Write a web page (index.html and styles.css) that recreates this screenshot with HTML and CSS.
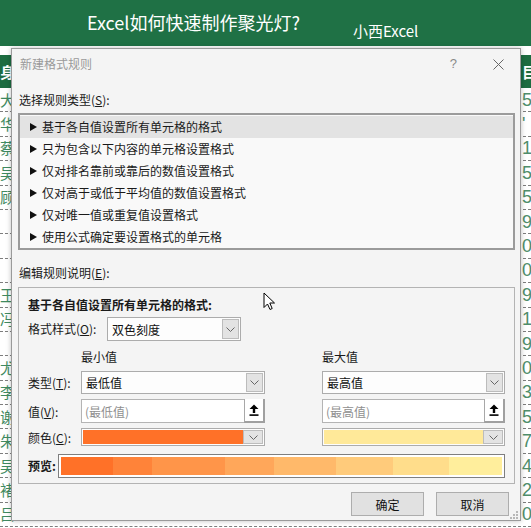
FILE: index.html
```html
<!DOCTYPE html>
<html lang="zh-CN">
<head>
<meta charset="utf-8">
<title>新建格式规则</title>
<link rel="stylesheet" href="styles.css">
</head>
<body>
<div class="banner">
  <span class="btitle">Excel如何快速制作聚光灯?</span>
  <span class="bsub">小西Excel</span>
</div>
<div class="sheet">
  <div class="hrow"><span class="lc">身</span><span class="rc">目</span></div>
  <div class="row"><span class="lc">大</span><span class="rc">5</span></div>
  <div class="row"><span class="lc">华</span><span class="rc">'</span></div>
  <div class="row"><span class="lc">蔡</span><span class="rc">1</span></div>
  <div class="row"><span class="lc">吴</span><span class="rc">5</span></div>
  <div class="row"><span class="lc">顾</span><span class="rc">5</span></div>
  <div class="row"><span class="lc"></span><span class="rc">9</span></div>
  <div class="row"><span class="lc"></span><span class="rc">0</span></div>
  <div class="row"><span class="lc"></span><span class="rc">0</span></div>
  <div class="row"><span class="lc">王</span><span class="rc">9</span></div>
  <div class="row"><span class="lc">冯</span><span class="rc">1</span></div>
  <div class="row"><span class="lc"></span><span class="rc">9</span></div>
  <div class="row"><span class="lc">尤</span><span class="rc">0</span></div>
  <div class="row"><span class="lc">李</span><span class="rc">3</span></div>
  <div class="row"><span class="lc">谢</span><span class="rc">5</span></div>
  <div class="row"><span class="lc">朱</span><span class="rc">7</span></div>
  <div class="row"><span class="lc">吴</span><span class="rc">4</span></div>
  <div class="row"><span class="lc">褚</span><span class="rc">2</span></div>
  <div class="row"><span class="lc">吕</span><span class="rc">0</span></div>
</div>

<div class="dialog">
  <div class="titlebar">
    <span class="dtitle">新建格式规则</span>
    <span class="help">?</span>
    <svg class="close" width="11" height="11" viewBox="0 0 11 11"><path d="M0.5 0.5 L10.5 10.5 M10.5 0.5 L0.5 10.5" stroke="#666" stroke-width="1" fill="none"/></svg>
  </div>
  <div class="label l1">选择规则类型(<u>S</u>):</div>
  <ul class="rulelist">
    <li class="sel"><svg class="tri" width="7" height="8" viewBox="0 0 7 8"><polygon points="0,0 7,4 0,8" fill="#111"/></svg>基于各自值设置所有单元格的格式</li>
    <li><svg class="tri" width="7" height="8" viewBox="0 0 7 8"><polygon points="0,0 7,4 0,8" fill="#111"/></svg>只为包含以下内容的单元格设置格式</li>
    <li><svg class="tri" width="7" height="8" viewBox="0 0 7 8"><polygon points="0,0 7,4 0,8" fill="#111"/></svg>仅对排名靠前或靠后的数值设置格式</li>
    <li><svg class="tri" width="7" height="8" viewBox="0 0 7 8"><polygon points="0,0 7,4 0,8" fill="#111"/></svg>仅对高于或低于平均值的数值设置格式</li>
    <li><svg class="tri" width="7" height="8" viewBox="0 0 7 8"><polygon points="0,0 7,4 0,8" fill="#111"/></svg>仅对唯一值或重复值设置格式</li>
    <li><svg class="tri" width="7" height="8" viewBox="0 0 7 8"><polygon points="0,0 7,4 0,8" fill="#111"/></svg>使用公式确定要设置格式的单元格</li>
  </ul>
  <div class="label l2">编辑规则说明(<u>E</u>):</div>
  <div class="rulebox">
    <div class="rtitle">基于各自值设置所有单元格的格式:</div>
    <div class="stylerow">
      <span class="slabel">格式样式(<u>O</u>):</span>
      <div class="combo stylecombo"><span class="ctext">双色刻度</span><span class="arrow"><svg width="9" height="5" viewBox="0 0 9 5"><polyline points="0.5,0.5 4.5,4.5 8.5,0.5" fill="none" stroke="#666" stroke-width="1"/></svg></span></div>
    </div>
    <div class="grid">
      <span></span><span class="colhead">最小值</span><span></span><span class="colhead">最大值</span>

      <span class="rl">类型(<u>T</u>):</span>
      <div class="combo"><span class="ctext">最低值</span><span class="arrow"><svg width="9" height="5" viewBox="0 0 9 5"><polyline points="0.5,0.5 4.5,4.5 8.5,0.5" fill="none" stroke="#666" stroke-width="1"/></svg></span></div>
      <span></span>
      <div class="combo"><span class="ctext">最高值</span><span class="arrow"><svg width="9" height="5" viewBox="0 0 9 5"><polyline points="0.5,0.5 4.5,4.5 8.5,0.5" fill="none" stroke="#666" stroke-width="1"/></svg></span></div>

      <span class="rl">值(<u>V</u>):</span>
      <div class="input"><span class="ph">(最低值)</span><span class="pick"><svg width="10" height="12" viewBox="0 0 10 12"><polygon points="5,0.5 9.5,5 6.2,5 6.2,9 3.8,9 3.8,5 0.5,5" fill="#000"/><rect x="0.5" y="10.3" width="9" height="1.6" fill="#000"/></svg></span></div>
      <span></span>
      <div class="input"><span class="ph">(最高值)</span><span class="pick"><svg width="10" height="12" viewBox="0 0 10 12"><polygon points="5,0.5 9.5,5 6.2,5 6.2,9 3.8,9 3.8,5 0.5,5" fill="#000"/><rect x="0.5" y="10.3" width="9" height="1.6" fill="#000"/></svg></span></div>

      <span class="rl">颜色(<u>C</u>):</span>
      <div class="combo colorcombo"><span class="swatch orange"></span><span class="arrow"><svg width="9" height="5" viewBox="0 0 9 5"><polyline points="0.5,0.5 4.5,4.5 8.5,0.5" fill="none" stroke="#666" stroke-width="1"/></svg></span></div>
      <span></span>
      <div class="combo colorcombo"><span class="swatch yellow"></span><span class="arrow"><svg width="9" height="5" viewBox="0 0 9 5"><polyline points="0.5,0.5 4.5,4.5 8.5,0.5" fill="none" stroke="#666" stroke-width="1"/></svg></span></div>
    </div>
    <div class="preview">
      <span class="plabel">预览:</span>
      <div class="bar">
        <span class="seg s1"></span><span class="seg s2"></span><span class="seg s3"></span><span class="seg s4"></span><span class="seg s5"></span><span class="seg s6"></span><span class="seg s7"></span><span class="seg s8"></span>
      </div>
    </div>
  </div>
  <div class="buttons">
    <button class="btn">确定</button>
    <button class="btn">取消</button>
  </div>
  <svg class="grip" width="8" height="8" viewBox="0 0 8 8">
    <rect x="6" y="0" width="2" height="2" fill="#b8b8b8"/>
    <rect x="3" y="3" width="2" height="2" fill="#b8b8b8"/>
    <rect x="6" y="3" width="2" height="2" fill="#b8b8b8"/>
    <rect x="0" y="6" width="2" height="2" fill="#b8b8b8"/>
    <rect x="3" y="6" width="2" height="2" fill="#b8b8b8"/>
    <rect x="6" y="6" width="2" height="2" fill="#b8b8b8"/>
  </svg>
</div>

<svg class="cursor" width="13" height="19" viewBox="0 0 13 19">
  <path d="M1 1 L1 15.5 L4.5 12 L7 17.5 L9.2 16.5 L6.8 11 L11.5 11 Z" fill="#fff" stroke="#000" stroke-width="1" stroke-linejoin="miter"/>
</svg>
</body>
</html>
```

FILE: styles.css
```css
html, body {
  margin: 0;
  padding: 0;
}
body {
  width: 531px;
  height: 528px;
  overflow: hidden;
  position: relative;
  background: #ffffff;
  font-family: "Noto Sans CJK SC", "Noto Sans", sans-serif;
}

/* banner */
.banner {
  height: 46px;
  background: #1f7145;
  color: #ffffff;
  display: flex;
  align-items: flex-start;
  padding-left: 87px;
  box-sizing: border-box;
}
.btitle {
  width: 266px;
  font-size: 18px;
  line-height: 24px;
  margin-top: 10px;
  white-space: nowrap;
}
.bsub {
  font-size: 15px;
  line-height: 20px;
  margin-top: 21px;
  white-space: nowrap;
}

/* background sheet */
.sheet {
  margin-top: 9px;
}
.hrow {
  height: 33px;
  background: #1d6c41;
  color: #ffffff;
  font-weight: bold;
  display: flex;
  align-items: center;
  justify-content: space-between;
  font-size: 15px;
}
.row {
  height: 24.4px;
  box-sizing: border-box;
  border-bottom: 1px dashed #7d7d7d;
  display: flex;
  align-items: center;
  justify-content: space-between;
  color: #3f8a60;
}
.lc {
  font-size: 15px;
  line-height: 20px;
  margin-left: 0;
  width: 20px;
}
.rc {
  font-family: "Liberation Sans", sans-serif;
  font-size: 18px;
  line-height: 20px;
  width: 9px;
  white-space: nowrap;
  color: #4f8e6b;
}
.hrow .rc {
  color: #ffffff;
  font-family: "Noto Sans CJK SC", sans-serif;
  font-size: 15px;
}

/* dialog */
.dialog {
  position: absolute;
  left: 11px;
  top: 48px;
  width: 510px;
  height: 473px;
  box-sizing: border-box;
  border: 1px solid #9a9a9a;
  background: #f4f4f4;
  box-shadow: 0 0 5px rgba(0, 0, 0, 0.25);
  padding: 0 5px 0 6px;
  display: flex;
  flex-direction: column;
  font-size: 12px;
  color: #1a1a1a;
}
.titlebar {
  height: 30px;
  display: flex;
  align-items: center;
}
.dtitle {
  padding-left: 2px;
  color: #9a9a9a;
  line-height: 16px;
}
.help {
  margin-left: auto;
  color: #8a8a8a;
  font-family: "Liberation Sans", sans-serif;
  font-size: 13px;
  line-height: 16px;
}
.close {
  margin-left: 36px;
  margin-right: 11px;
}
.label {
  line-height: 16px;
  padding-left: 1px;
}
.l1 {
  margin-top: 13px;
}
.l2 {
  margin-top: 15px;
}
u {
  text-decoration: underline;
  text-underline-offset: 1px;
}

.rulelist {
  list-style: none;
  margin: 5px 0 0 0;
  padding: 1px 0 0 0;
  height: 137px;
  box-sizing: border-box;
  border: 2px solid #9b9b9b;
  background: #f9f9f9;
}
.rulelist li {
  height: 22px;
  line-height: 22px;
  display: flex;
  align-items: center;
  padding-left: 10px;
}
.rulelist li.sel {
  background: #e3e3e3;
}
.tri {
  margin-right: 5px;
  flex: none;
}

.rulebox {
  margin-top: 6px;
  height: 197px;
  box-sizing: border-box;
  border: 1px solid #b3b3b3;
  padding: 9px 0 5px 9px;
  display: flex;
  flex-direction: column;
}
.rtitle {
  font-weight: bold;
  line-height: 16px;
}
.stylerow {
  margin-top: 4px;
  display: flex;
  align-items: center;
  height: 24px;
}
.slabel {
  width: 79px;
  line-height: 16px;
}
.combo {
  box-sizing: border-box;
  border: 1px solid #acacac;
  background: #fdfdfd;
  display: flex;
  align-items: stretch;
  padding: 1px;
}
.stylecombo {
  width: 134px;
  height: 24px;
}
.ctext {
  flex: 1;
  padding-left: 3px;
  display: flex;
  align-items: center;
  font-size: 12px;
  color: #111;
}
.arrow {
  width: 17px;
  box-sizing: border-box;
  border: 1px solid #bcbcbc;
  background: #e3e3e3;
  display: flex;
  align-items: center;
  justify-content: center;
}

.grid {
  margin-top: 8px;
  display: grid;
  grid-template-columns: 53px 184px 57px 183px;
  grid-template-rows: 17px 23px 24px 18px;
  row-gap: 5px;
  align-items: stretch;
}
.colhead {
  line-height: 16px;
}
.rl {
  display: flex;
  align-items: center;
}
.input {
  box-sizing: border-box;
  border: 1px solid #b4b4b4;
  background: #ffffff;
  display: flex;
  align-items: stretch;
}
.ph {
  flex: 1;
  padding-left: 3px;
  color: #8f8f8f;
  display: flex;
  align-items: center;
}
.pick {
  width: 21px;
  box-sizing: border-box;
  border-left: 1px solid #a8a8a8;
  border-right: 2px solid #a0a0a0;
  border-bottom: 2px solid #a0a0a0;
  background: #ffffff;
  display: flex;
  align-items: center;
  justify-content: center;
  margin: -1px -1px -1px 0;
}
.colorcombo {
  padding: 1px;
}
.colorcombo .arrow {
  width: 20px;
}
.swatch {
  flex: 1;
}
.orange {
  background: #ff7128;
}
.yellow {
  background: #ffe999;
}

.preview {
  margin-top: 8px;
  display: flex;
  align-items: center;
  height: 24px;
}
.plabel {
  width: 30px;
  font-weight: bold;
  line-height: 16px;
}
.bar {
  width: 447px;
  height: 24px;
  box-sizing: border-box;
  border: 1px solid #7f7f7f;
  background: #ffffff;
  padding: 2px;
  display: flex;
}
.seg { display: block; }
.s1 { flex: 52; background: #ff7128; }
.s2 { flex: 39; background: #ff8339; }
.s3 { flex: 73; background: #ff9549; }
.s4 { flex: 49; background: #ffa75a; }
.s5 { flex: 63; background: #ffb96a; }
.s6 { flex: 57; background: #ffcb7b; }
.s7 { flex: 56; background: #ffdd8b; }
.s8 { flex: 53; background: #ffee9c; }

.buttons {
  margin-top: 8px;
  display: flex;
  justify-content: flex-end;
  gap: 12px;
  padding-right: 6px;
}
.btn {
  width: 73px;
  height: 24px;
  box-sizing: border-box;
  border: 1px solid #adadad;
  background: #e1e1e1;
  font-family: "Noto Sans CJK SC", sans-serif;
  font-size: 12px;
  color: #111;
  padding: 0;
  margin: 0;
}
.grip {
  position: absolute;
  right: 2px;
  bottom: 1px;
}
.cursor {
  position: absolute;
  left: 263px;
  top: 292px;
}
```
